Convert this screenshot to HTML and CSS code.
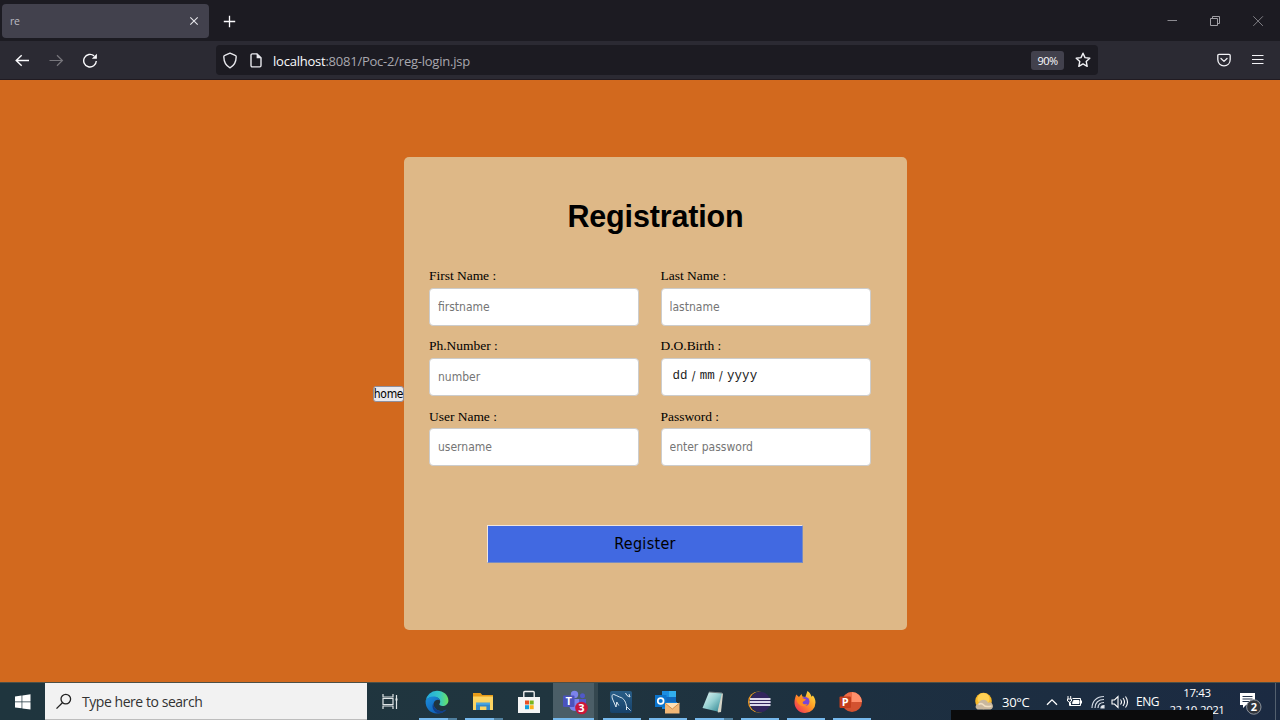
FILE: index.html
```
<!DOCTYPE html>
<html lang="en">
<head>
<meta charset="utf-8">
<title>re</title>
<link rel="stylesheet" href="styles.css">
</head>
<body>
<div class="screen">
  <header class="tabs">
    <div class="tab"><span class="tab-title">re</span>
      <svg class="tab-close" width="10" height="10" viewBox="0 0 10 10"><path d="M1.3 1.3l7.4 7.4M8.7 1.3L1.3 8.7" stroke="#e5e5ea" stroke-width="1.1"/></svg>
    </div>
    <svg class="new-tab" width="14" height="14" viewBox="0 0 14 14"><path d="M7.500 1.800v11.400M1.800 7.500h11.400" stroke="#fbfbfe" stroke-width="1.3"/></svg>
    <div class="window-controls">
      <svg width="12" height="12" viewBox="0 0 12 12"><path d="M1.5 5.5h9.5" stroke="#8b8a90"/></svg>
      <svg width="12" height="12" viewBox="0 0 12 12" fill="none" stroke="#a09fa5"><path d="M1.5 3.5h7v7h-7zM3.5 3.5v-2h7v7h-2"/></svg>
      <svg width="12" height="12" viewBox="0 0 12 12"><path d="M1.3 1.3l9.6 9.6M10.9 1.3L1.3 10.9" stroke="#8b8a90" stroke-width=".9"/></svg>
    </div>
  </header>
  <nav class="toolbar">
    <svg class="nav-back" width="16" height="16" viewBox="0 0 16 16" fill="none" stroke="#fbfbfe" stroke-width="1.4"><path d="M15 8.500H2.200M7.700 3.300L2.200 8.500l5.500 5.200"/></svg>
    <svg class="nav-forward" width="16" height="16" viewBox="0 0 16 16" fill="none" stroke="#77767c" stroke-width="1.2"><path d="M1.5 8.500h12.800M9 3.300l5.400 5.200L9 13.700"/></svg>
    <svg class="nav-reload" width="16" height="16" viewBox="0 0 16 16" fill="none"><path d="M14.3 9a6.3 6.3 0 1 1-2.2-5.1" stroke="#fbfbfe" stroke-width="1.4"/><path d="M14.9 1.700v5.1H9.8z" fill="#fbfbfe"/></svg>
    <div class="address">
      <svg class="shield" width="16" height="17" viewBox="0 0 16 17" fill="none" stroke="#e8e8ed" stroke-width="1.4" stroke-linejoin="round"><path d="M8 1.1l5.200 2.2c.8.3 1 .8 1 1.5-.1 5.5-2.3 9.1-6.200 11C4.100 13.900 1.900 10.300 1.800 4.800c0-.7.2-1.200 1-1.500z"/></svg>
      <svg class="page" width="12" height="15" viewBox="0 0 12 15"><path d="M2.300.9H7l4 4v7.700a1.300 1.300 0 0 1-1.300 1.300H2.300A1.300 1.300 0 0 1 1 12.600V2.200A1.300 1.300 0 0 1 2.300.9z" fill="none" stroke="#e8e8ed" stroke-width="1.400"/><path d="M6.600.6v4.700h4.700z" fill="#e8e8ed"/></svg>
      <span class="url"><b>localhost</b>:8081/Poc-2/reg-login.jsp</span>
      <span class="zoom">90%</span>
      <svg class="star" width="16" height="16" viewBox="0 0 16 16" fill="none" stroke="#f2f2f6" stroke-width="1.400" stroke-linejoin="round"><path d="M8 1.200l2 4.400 4.800.6-3.600 3.200 1 4.900L8 11.900l-4.200 2.400 1-4.900-3.600-3.200 4.800-.6z"/></svg>
    </div>
    <svg class="pocket" width="14" height="14" viewBox="0 0 14 14" fill="none" stroke="#f2f2f6" stroke-width="1.300" stroke-linecap="round" stroke-linejoin="round"><path d="M2 1.400h10c.8 0 1.200.4 1.200 1.200v4c0 3.800-2.700 6.200-6.200 6.200S.8 10.400.8 6.600v-4c0-.8.4-1.200 1.200-1.200z"/><path d="M4 5.500l3 2.900 3-2.900"/></svg>
    <svg class="menu" width="12" height="12" viewBox="0 0 12 12"><path d="M0 1.500h11.500M0 5.500h11.500M0 9.500h11.500" stroke="#f2f2f6" stroke-width="1.200"/></svg>
  </nav>

  <main class="content">
    <button class="home">home</button>
    <section class="card">
      <h1>Registration</h1>
      <form class="form">
        <div class="fields">
          <label class="field">First Name :<input type="text" placeholder="firstname"></label>
          <label class="field">Last Name :<input type="text" placeholder="lastname"></label>
          <label class="field">Ph.Number :<input type="text" placeholder="number"></label>
          <div class="field">D.O.Birth :<div class="date-input"><span>dd</span><i>/</i><span>mm</span><i>/</i><span>yyyy</span></div></div>
          <label class="field">User Name :<input type="text" placeholder="username"></label>
          <label class="field">Password :<input type="password" placeholder="enter password"></label>
        </div>
        <button class="register" type="button">Register</button>
      </form>
    </section>
  </main>

  <footer class="taskbar">
    <div class="start"><svg width="16" height="16" viewBox="0 0 16 16" fill="#fff"><path d="M0 2.400l6.600-.9v6H0zM7.300 1.400L15.500.2v7.300H7.300zM0 8.200h6.600v6.100L0 13.400zM7.300 8.200h8.200v7.400l-8.200-1.200z"/></svg></div>
    <div class="search">
      <svg width="17" height="17" viewBox="0 0 17 17" fill="none" stroke="#222" stroke-width="1.300"><circle cx="10.800" cy="6.100" r="4.800"/><path d="M7.400 9.700L1.500 15.600"/></svg>
      <span>Type here to search</span>
    </div>
    <div class="app"><svg width="18" height="18" viewBox="0 0 18 18" fill="none" stroke="#dfe5e7" stroke-width="1.200"><path d="M1 1v3h10V1M1 16v-3h10v3M1 5.500h10v6H1zM14.500 2v14"/><path d="M13.500 6.500h2" stroke-width="2"/></svg></div>
    <div class="app open wide"><svg width="24" height="24" viewBox="0 0 24 24">
      <defs>
        <linearGradient id="edge-top" x1="0" x2="1"><stop stop-color="#21a7e0"/><stop offset=".6" stop-color="#35c6c6"/><stop offset="1" stop-color="#6be35f"/></linearGradient>
        <linearGradient id="edge-low" x1="0" x2="1" y2="1"><stop stop-color="#1b8fdc"/><stop offset="1" stop-color="#0c4fa8"/></linearGradient>
      </defs>
      <path d="M.6 11A11.400 11.400 0 0 1 12 .7c6.500 0 11.400 4.400 11.400 9.700 0 3.500-2.700 5.600-5.800 5.600-2.300 0-3.600-.9-3.200-1.900.6-1 1-2 .7-3.500C14.500 7.900 11.500 7 8.700 7 5 7 2 8.600.6 11z" fill="url(#edge-top)"/>
      <path d="M.6 11C2 8.300 5 6.600 8.500 6.600c3.400 0 6.200 1.700 6.600 4-1.500-1.500-5.400-1-6.300 2.200-1 4 2.500 8.200 7.200 8.200 2.300 0 4-.8 5.600-1.800C19.500 22 16 23.600 12 23.600 5.400 23.600.2 18 .6 11z" fill="url(#edge-low)"/>
      <path d="M8.800 12.800c-1 4 2.500 8.200 7.200 8.200 2.300 0 4-.8 5.600-1.800-1.700 2.600-4.800 4-8 4.300C9 22.400 5.500 17 8.800 12.800z" fill="#123f88"/></svg></div>
    <div class="app open wide"><svg width="22" height="20" viewBox="0 0 22 20"><path d="M1 1h7.500l1.800 2H21v5H1z" fill="#e79c18"/><path d="M1 4.500h20V18H1z" fill="#fcd462"/><path d="M4 18v-7.300h14V18h-3.600v-3.500H8V18z" fill="#3488c9"/><path d="M4 10.700h14v2H4z" fill="#49a6e2"/></svg></div>
    <div class="app"><svg width="22" height="24" viewBox="0 0 22 24"><path d="M5.800 8V2.500q0-1 1-1h8.400q1 0 1 1V8" fill="none" stroke="#eee" stroke-width="1.400"/><path d="M0 7h22v16H0z" fill="#f5f5f5"/><path d="M7 10.500h4v4H7z" fill="#ea4f24"/><path d="M11.700 10.500h4v4h-4z" fill="#79b51c"/><path d="M7 15.200h4v4H7z" fill="#129fdf"/><path d="M11.700 15.200h4v4h-4z" fill="#fab21a"/></svg></div>
    <div class="app open active"><svg width="26" height="26" viewBox="0 0 26 26"><circle cx="12.500" cy="5.500" r="3.700" fill="#7b83eb"/><circle cx="20.500" cy="6.800" r="2.500" fill="#5059c9"/><path d="M7.500 10h10v7a5 5 0 0 1-10 0z" fill="#7b83eb"/><path d="M17 10h7v5a4 4 0 0 1-7 2z" fill="#5059c9"/><rect x="1" y="6.500" width="11.500" height="11.500" rx="1" fill="#4b53bc"/><text x="6.700" y="16.200" class="teams-letter">T</text><circle cx="19.500" cy="19" r="6.300" fill="#c9183a"/><text x="19.500" y="23" class="badge-number">3</text></svg></div>
    <div class="app open"><svg width="24" height="24" viewBox="0 0 24 24"><defs><linearGradient id="sql" x2="0" y2="1"><stop stop-color="#285d87"/><stop offset="1" stop-color="#17426a"/></linearGradient></defs><rect x="1" y="1" width="22" height="22" rx="2" fill="url(#sql)"/><path d="M7 17L3.500 9c-1-3-.4-5 1.500-4.500 2 .4 3.500 2 5.500 2.500 5 1 6.500 6 7 9.500l4 4M7 17l.8-5 2 3.500M17.500 16.500v3.500M16.500 3l1.500 2.500L21 7l-1-3" fill="none" stroke="#dce8f1"/></svg></div>
    <div class="app open"><svg width="26" height="26" viewBox="0 0 26 26"><path d="M8 2h14v11H8z" fill="#1068bd"/><path d="M8 2h7v6H8z" fill="#1b8de1"/><path d="M15 2h7v6h-7z" fill="#32aeed"/><path d="M8 13h15v7H8z" fill="#1681d7"/><rect x="1" y="6" width="11.500" height="12" fill="#0b74cc"/><circle cx="6.700" cy="12" r="2.900" fill="none" stroke="#fff" stroke-width="1.700"/><path d="M11 14h14.500v10.500H11z" fill="#f2b776"/><path d="M11 14l7.300 6 7.200-6" fill="#ffe0b5" stroke="#c9803a" stroke-width=".8"/></svg></div>
    <div class="app open wide"><svg width="24" height="24" viewBox="0 0 24 24"><defs><linearGradient id="note" x2="1" y2="1"><stop stop-color="#e8f8f7"/><stop offset=".5" stop-color="#94cfd1"/><stop offset="1" stop-color="#277f8d"/></linearGradient></defs><path d="M9 2l13 1.500L20 22l-3 .5z" fill="#d4d3c6"/><path d="M8 2l13 1-4.500 18.500L1.500 18z" fill="url(#note)"/><path d="M8 2l13 1" stroke="#6f797c" stroke-width="1.200"/></svg></div>
    <div class="app open"><svg width="24" height="24" viewBox="0 0 24 24"><circle cx="11.500" cy="12" r="10.500" fill="#f59a23"/><circle cx="13" cy="12" r="10.600" fill="#20324a"/><circle cx="13.500" cy="12" r="10" fill="#32255e"/><path d="M3 9h20.500M2.600 12h21M3 15h20.500" stroke="#dcd9ec" stroke-width="2"/></svg></div>
    <div class="app open"><svg width="24" height="24" viewBox="0 0 24 24"><defs><linearGradient id="fox" x1="1" x2="0" y2="1"><stop stop-color="#fff04a"/><stop offset=".45" stop-color="#ff9a24"/><stop offset="1" stop-color="#f0205f"/></linearGradient></defs><path d="M3.200 4.500L6 7l2.500-3 .9 2.500 3 .5 2-6c2.600 1.500 3.600 3.700 4.100 5.800l1.400-1.300c1.600 2 2.600 4.200 2.600 7A10.500 10.500 0 0 1 12 23 10.500 10.500 0 0 1 1.500 12c0-3 1-5 1.700-7.500z" fill="url(#fox)"/><circle cx="12" cy="11.500" r="4.500" fill="#7945d5"/><path d="M3 7.500c4-1 7 1 10 2-1 1.800-3.500 1.500-3.300 3.200.2 1.500 2.600 2 4.800 1.200C12.500 18 4 17 3 7.500z" fill="#ff8b1f"/></svg></div>
    <div class="app open"><svg width="24" height="24" viewBox="0 0 24 24"><circle cx="13" cy="12" r="10" fill="#d35230"/><path d="M13 2a10 10 0 0 1 10 10H13z" fill="#ff8f6b"/><path d="M3 12A10 10 0 0 1 13 2v10z" fill="#ed6c47"/><rect x=".5" y="6.500" width="11.500" height="11.500" rx="1" fill="#c43e1c"/><text x="6.300" y="16.200" class="office-letter">P</text></svg></div>
    <div class="tray">
      <svg class="weather" width="20" height="20" viewBox="0 0 20 20"><circle cx="9.500" cy="9" r="8.300" fill="#f9b928"/><circle cx="9.500" cy="7" r="6" fill="#ffd155"/><path d="M3.500 17.500a3 3 0 0 1 1-5.800 5 5 0 0 1 9.500-1 3.500 3.500 0 0 1 2.500 6.800z" fill="#c9b79e"/><path d="M4.500 12.500q3-2 5 .5t8 1" stroke="#f1dfc2" stroke-width="1.600" fill="none"/></svg>
      <span class="temperature">30°C</span>
      <svg class="chevron" width="12" height="8" viewBox="0 0 12 8"><path d="M1 6.800l5-5 5 5" fill="none" stroke="#fff" stroke-width="1.300"/></svg>
      <svg class="battery" width="17" height="14" viewBox="0 0 17 14" fill="none" stroke="#fff"><path d="M6.500 3.500h8v7h-10v-3M15.500 5.500v3M2 1v3M4.700 1v3M1.500 4h4v2q-2 2.500-4 0zM3.500 7v3.500H5"/><path d="M7.500 5.500h5.500v3H6.500z" fill="#fff"/></svg>
      <svg class="wifi" width="14" height="14" viewBox="0 0 14 14" fill="none" stroke="#d5dce6" stroke-width="1.200"><path d="M1 13C1 6 6 1.500 13 1.500M4 13c0-5.500 3.500-8.500 9-8.500M7 13c0-3.500 2-5.500 6-5.500"/><path d="M10 13c0-1.600 1-2.500 3-2.500V13z" fill="#fff"/></svg>
      <svg class="volume" width="18" height="14" viewBox="0 0 18 14" fill="none" stroke="#fff" stroke-width="1.100"><path d="M1 5h2.500L7 1.500v11L3.500 9H1zM9.500 4.500q2 2.500 0 5M12 3q3 4 0 8M14.500 1.500q4 5.500 0 11"/></svg>
      <span class="language">ENG</span>
      <div class="clock"><span>17:43</span><span class="date">22-10-2021</span></div>
      <div class="notifications"><svg width="24" height="26" viewBox="0 0 24 26"><path d="M1 2h15v12H7l-3 3v-3H1z" fill="#fff"/><path d="M3.500 5.500h10M3.500 8h10M3.500 10.500h7" stroke="#24334a"/><circle cx="14.800" cy="16" r="7.200" fill="#30343b" stroke="#8d949d"/><text x="14.800" y="20.200" class="notice-number">2</text></svg></div>
      <div class="show-desktop"></div>
    </div>
    <div class="overlay-strip"></div>
  </footer>
</div>
</body>
</html>
```

FILE: styles.css
```
* { box-sizing: border-box; }
body { margin: 0; overflow: hidden; }
svg { display: block; flex: none; }
button, input { margin: 0; }
.screen { width: 1280px; height: 720px; display: flex; flex-direction: column; overflow: hidden; background: #d2691e; font-family: "Open Sans", "Noto Sans", sans-serif; }

.tabs { height: 41px; flex: none; background: #1c1b22; display: flex; align-items: center; padding-left: 2px; }
.tab { width: 207px; height: 34px; background: #42414d; border-radius: 4px; display: flex; align-items: center; justify-content: space-between; padding: 0 10px 0 8px; color: #bcbbc3; font-size: 10.500px; letter-spacing: -.3px; }
.new-tab { margin-left: 13px; }
.window-controls { display: flex; gap: 31px; margin-left: auto; padding-right: 16px; }

.toolbar { height: 39px; flex: none; background: #2b2a33; border-bottom: 1px solid #211b22; display: flex; align-items: center; padding-left: 14px; }
.nav-forward { margin-left: 18px; }
.nav-reload { margin-left: 18px; }
.address { width: 882px; height: 30px; margin-left: 118px; border-radius: 4px; background: #1c1b22; display: flex; align-items: center; padding: 0 7px 0 6px; }
.page { margin-left: 12px; }
.url { margin-left: 11px; color: #a9a8af; font-size: 13px; line-height: 18px; letter-spacing: -.23px; padding-top: 1px; }
.url b { font-weight: 400; color: #fbfbfe; }
.zoom { width: 33px; height: 19px; margin-left: auto; border-radius: 3px; background: #42414d; color: #fbfbfe; font-size: 11px; line-height: 20px; text-align: center; letter-spacing: -.5px; }
.star { margin-left: 11px; }
.pocket { margin-left: 119px; }
.menu { margin-left: 21px; }

.content { height: 602px; flex: none; display: flex; align-items: flex-start; padding: 77px 0 0 373px; background: #d2691e; }
.home { width: 31px; height: 16px; margin-top: 229px; padding: 0; border: 1px solid #8f8f9d; border-radius: 3px; background: #e9e9ed; color: #000; font: 12px/14px "DejaVu Sans Condensed", "DejaVu Sans", sans-serif; letter-spacing: -.3px; white-space: nowrap; display: flex; justify-content: center; }
.card { width: 503px; height: 473px; background: #deb887; border-radius: 5px; padding: 41px 25px 0; }
h1 { margin: 0; font: bold 30.500px/37px "Liberation Sans", Arial, sans-serif; letter-spacing: -.15px; text-align: center; color: #000; }
.form { display: flex; flex-direction: column; padding-top: 32px; }
.fields { display: grid; grid-template-columns: 210px 210px; column-gap: 21.500px; grid-auto-rows: 70.400px; }
.field { display: block; font: 13.500px/18px "Liberation Serif", "Times New Roman", serif; color: #000; letter-spacing: -.03px; }
.field input, .date-input { display: flex; align-items: center; width: 210px; height: 38px; margin-top: 2.500px; padding: 0 8px; border: 1px solid #ccc; border-radius: 4px; background: #fff; color: #000; outline: 0; font: 12px "DejaVu Sans Condensed", "DejaVu Sans", sans-serif; letter-spacing: 0; }
.field input::placeholder { color: #757575; opacity: 1; }
.date-input { font: 12.500px "Liberation Mono", "Courier New", monospace; color: #222; padding: 0 0 1px 11px; letter-spacing: .1px; }
.date-input i { width: 12px; text-align: center; font: 12px "DejaVu Sans Condensed", sans-serif; }
.register { width: 316px; height: 38px; margin: 46.500px 0 0 58px; background: #4169e1; border: 1px solid; border-color: #f0e6df #778bc2 #778bc2 #f0e6df; color: #000; font: 16px "DejaVu Sans Condensed", "DejaVu Sans", sans-serif; letter-spacing: .3px; }

.taskbar { height: 38px; flex: none; position: relative; display: flex; background: linear-gradient(90deg, #1f353e 0, #20353f 45%, #1d3040 65%, #1b2a42 100%); border-top: 1px solid #4c5047; }
.start { width: 45px; display: flex; align-items: center; justify-content: center; }
.search { width: 322px; margin-right: 1px; background: #f2f2f2; border-bottom: 1px solid #bdbdbd; display: flex; align-items: center; gap: 10px; padding-left: 10px; color: #333; font-size: 14px; letter-spacing: -.45px; }
.app { width: 46px; display: flex; align-items: center; justify-content: center; position: relative; }
.open::after { content: ""; position: absolute; left: 5px; bottom: 0; width: 38px; height: 2px; background: #76b9ed; }
.wide::after { background: linear-gradient(90deg, #76b9ed 29px, #50809f 29px); }
.active { background: linear-gradient(90deg, transparent 1px, #4b5e67 1px, #4b5e67 42px, #34474f 42px); }
.active::after { left: 1px; width: 41px; }
.tray { margin-left: auto; width: 306px; display: flex; align-items: center; color: #fff; }
.temperature { width: 29px; margin-left: 8px; font-size: 13px; letter-spacing: -.3px; white-space: nowrap; }
.chevron { margin-left: 15px; }
.battery { margin-left: 8px; }
.wifi { margin-left: 8px; }
.volume { margin-left: 6px; }
.language { margin-left: 7px; font-size: 12px; letter-spacing: -.5px; }
.clock { width: 56px; margin: -2px 0 0 10px; display: flex; flex-direction: column; align-items: center; font-size: 11.500px; line-height: 17px; letter-spacing: -.4px; white-space: nowrap; }
.date { letter-spacing: -.5px; }
.notifications { margin-left: 14px; padding-top: 5px; }
.show-desktop { width: 1px; align-self: stretch; margin-left: auto; margin-right: 4px; background: #53606f; }
.overlay-strip { position: absolute; left: 951px; bottom: 0; width: 262px; height: 10px; background: #0b0b0c; }
.teams-letter, .badge-number, .office-letter, .notice-number { fill: #fff; text-anchor: middle; font: bold 11px "Open Sans", sans-serif; }
```
